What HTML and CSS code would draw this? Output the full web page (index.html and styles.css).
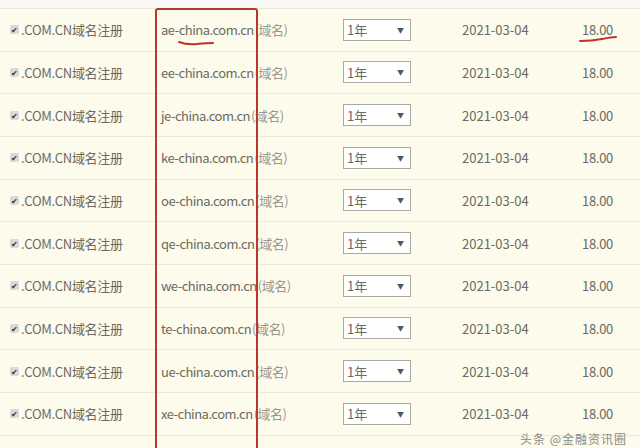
FILE: index.html
```html
<!DOCTYPE html>
<html lang="zh-CN">
<head>
    <meta charset="UTF-8">
    <title>域名注册</title>
    <link rel="stylesheet" href="styles.css">
</head>
<body>
    <div class="top-strip"></div>
    <div class="cart">
        <div class="row">
            <div class="c-name"><span class="check">&#10004;</span>.COM.CN域名注册</div>
            <div class="c-domain">ae-china.com.cn<span class="tag">(域名)</span></div>
            <div class="c-year"><span class="sel">1年<i>&#9660;</i></span></div>
            <div class="c-date">2021-03-04</div>
            <div class="c-price">18.00</div>
        </div>
        <div class="row">
            <div class="c-name"><span class="check">&#10004;</span>.COM.CN域名注册</div>
            <div class="c-domain">ee-china.com.cn<span class="tag">(域名)</span></div>
            <div class="c-year"><span class="sel">1年<i>&#9660;</i></span></div>
            <div class="c-date">2021-03-04</div>
            <div class="c-price">18.00</div>
        </div>
        <div class="row">
            <div class="c-name"><span class="check">&#10004;</span>.COM.CN域名注册</div>
            <div class="c-domain">je-china.com.cn<span class="tag">(域名)</span></div>
            <div class="c-year"><span class="sel">1年<i>&#9660;</i></span></div>
            <div class="c-date">2021-03-04</div>
            <div class="c-price">18.00</div>
        </div>
        <div class="row">
            <div class="c-name"><span class="check">&#10004;</span>.COM.CN域名注册</div>
            <div class="c-domain">ke-china.com.cn<span class="tag">(域名)</span></div>
            <div class="c-year"><span class="sel">1年<i>&#9660;</i></span></div>
            <div class="c-date">2021-03-04</div>
            <div class="c-price">18.00</div>
        </div>
        <div class="row">
            <div class="c-name"><span class="check">&#10004;</span>.COM.CN域名注册</div>
            <div class="c-domain">oe-china.com.cn<span class="tag">(域名)</span></div>
            <div class="c-year"><span class="sel">1年<i>&#9660;</i></span></div>
            <div class="c-date">2021-03-04</div>
            <div class="c-price">18.00</div>
        </div>
        <div class="row">
            <div class="c-name"><span class="check">&#10004;</span>.COM.CN域名注册</div>
            <div class="c-domain">qe-china.com.cn<span class="tag">(域名)</span></div>
            <div class="c-year"><span class="sel">1年<i>&#9660;</i></span></div>
            <div class="c-date">2021-03-04</div>
            <div class="c-price">18.00</div>
        </div>
        <div class="row">
            <div class="c-name"><span class="check">&#10004;</span>.COM.CN域名注册</div>
            <div class="c-domain">we-china.com.cn<span class="tag">(域名)</span></div>
            <div class="c-year"><span class="sel">1年<i>&#9660;</i></span></div>
            <div class="c-date">2021-03-04</div>
            <div class="c-price">18.00</div>
        </div>
        <div class="row">
            <div class="c-name"><span class="check">&#10004;</span>.COM.CN域名注册</div>
            <div class="c-domain">te-china.com.cn<span class="tag">(域名)</span></div>
            <div class="c-year"><span class="sel">1年<i>&#9660;</i></span></div>
            <div class="c-date">2021-03-04</div>
            <div class="c-price">18.00</div>
        </div>
        <div class="row">
            <div class="c-name"><span class="check">&#10004;</span>.COM.CN域名注册</div>
            <div class="c-domain">ue-china.com.cn<span class="tag">(域名)</span></div>
            <div class="c-year"><span class="sel">1年<i>&#9660;</i></span></div>
            <div class="c-date">2021-03-04</div>
            <div class="c-price">18.00</div>
        </div>
        <div class="row">
            <div class="c-name"><span class="check">&#10004;</span>.COM.CN域名注册</div>
            <div class="c-domain">xe-china.com.cn<span class="tag">(域名)</span></div>
            <div class="c-year"><span class="sel">1年<i>&#9660;</i></span></div>
            <div class="c-date">2021-03-04</div>
            <div class="c-price">18.00</div>
        </div>
        <div class="row"></div>

        <!-- red annotations drawn over the table -->
        <div class="mark-box"></div>
        <svg class="mark-line mark-china" width="40" height="8" viewBox="0 0 40 8">
            <path d="M2 3 Q 10 6 20 5 T 36 4" stroke="#c0312a" stroke-width="2" fill="none" stroke-linecap="round"/>
        </svg>
        <svg class="mark-line mark-price" width="42" height="8" viewBox="0 0 42 8">
            <path d="M2 6 Q 14 6 24 4 T 38 2" stroke="#c0312a" stroke-width="2" fill="none" stroke-linecap="round"/>
        </svg>
        <div class="watermark">头条 @金融资讯圈</div>
    </div>
</body>
</html>
```

FILE: styles.css
```css
body {
    margin: 0;
    background-color: #fdfbec;
    font-family: "Noto Sans CJK SC", "Open Sans", sans-serif;
    font-size: 13px;
    color: #6b6a62;
    overflow: hidden;
}

.top-strip {
    height: 8px;
    background-color: #f8f8f6;
}

.cart {
    position: relative;
}

.row {
    display: grid;
    grid-template-columns: 161px 182px 119px 120px 58px;
    align-items: center;
    height: 42.67px;
    box-sizing: border-box;
    border-top: 1px solid #ede9d6;
}

.c-name {
    padding-left: 10px;
    display: flex;
    align-items: center;
    white-space: nowrap;
    letter-spacing: -0.3px;
}

.check {
    display: inline-block;
    width: 9px;
    height: 9px;
    margin-right: 2px;
    background-color: #d9d9d6;
    border-radius: 2px;
    font-size: 8px;
    line-height: 9px;
    text-align: center;
    color: #333;
}

.c-domain {
    white-space: nowrap;
    letter-spacing: -0.5px;
}

.tag {
    margin-left: 1px;
    color: #9a988c;
}

.sel {
    display: flex;
    justify-content: space-between;
    align-items: center;
    width: 68px;
    height: 22px;
    box-sizing: border-box;
    padding: 0 6px 0 3px;
    background-color: #fff;
    border: 1px solid #a9a9a4;
}

.sel i {
    font-style: normal;
    font-size: 7px;
    color: #555;
}

.c-price {
    letter-spacing: -0.3px;
}

.mark-box {
    position: absolute;
    left: 155px;
    top: 0;
    width: 103px;
    height: 460px;
    box-sizing: border-box;
    border: 2px solid #b9382e;
    border-radius: 3px;
}

.mark-line {
    position: absolute;
}

.mark-china {
    left: 177px;
    top: 31px;
}

.mark-price {
    left: 578px;
    top: 27px;
}

.watermark {
    position: absolute;
    left: 520px;
    top: 424px;
    font-size: 12px;
    line-height: 14px;
    color: #8a8a85;
    letter-spacing: 1px;
    white-space: nowrap;
}
```
